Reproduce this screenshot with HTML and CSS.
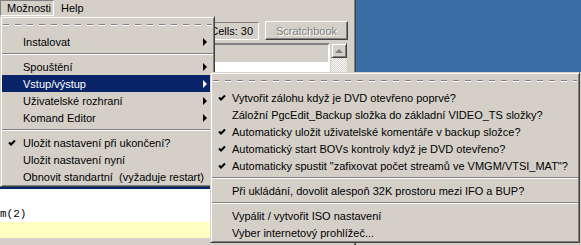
FILE: index.html
```html
<!DOCTYPE html>
<html lang="cs">
<head>
    <meta charset="UTF-8">
    <title>PgcEdit - Možnosti</title>
    <link rel="stylesheet" href="styles.css">
</head>
<body>

    <div class="screen">

        <!-- Main application window -->
        <div class="app">
            <div class="menubar">
                <span class="mb-item open">Možnosti</span>
                <span class="mb-item">Help</span>
            </div>

            <div class="toolbar">
                <span class="cells">Cells: 30</span>
                <button class="btn" disabled>Scratchbook</button>
            </div>

            <div class="list-area">
                <div class="list">
                    <div class="list-head"></div>
                </div>
                <div class="scrollbar">
                    <div class="scroll-up"><span class="up-arrow"></span></div>
                    <div class="scroll-track"></div>
                </div>
            </div>

            <div class="editor">
                <div class="line"></div>
                <div class="line">m(2)</div>
                <div class="line current"></div>
            </div>
        </div>

        <div class="desktop"></div>

        <!-- Možnosti menu -->
        <div class="dropdown main-menu">
            <div class="tearoff"></div>
            <div class="item"><span class="mark"></span><span class="label">Instalovat</span><span class="arrow"></span></div>
            <div class="sep"></div>
            <div class="item"><span class="mark"></span><span class="label">Spouštění</span><span class="arrow"></span></div>
            <div class="item active"><span class="mark"></span><span class="label">Vstup/výstup</span><span class="arrow"></span></div>
            <div class="item"><span class="mark"></span><span class="label">Uživatelské rozhraní</span><span class="arrow"></span></div>
            <div class="item"><span class="mark"></span><span class="label">Komand Editor</span><span class="arrow"></span></div>
            <div class="sep"></div>
            <div class="item"><span class="mark"><svg width="8" height="8" viewBox="0 0 8 8"><polyline points="1,3.5 3,5.5 7,1.5"/></svg></span><span class="label">Uložit nastavení při ukončení?</span></div>
            <div class="item"><span class="mark"></span><span class="label">Uložit nastavení nyní</span></div>
            <div class="item"><span class="mark"></span><span class="label">Obnovit standartní&nbsp; (vyžaduje restart)</span></div>
        </div>

        <!-- Vstup/výstup submenu -->
        <div class="dropdown sub-menu">
            <div class="tearoff"></div>
            <div class="item"><span class="mark"><svg width="8" height="8" viewBox="0 0 8 8"><polyline points="1,3.5 3,5.5 7,1.5"/></svg></span><span class="label">Vytvořit zálohu když je DVD otevřeno poprvé?</span></div>
            <div class="item"><span class="mark"></span><span class="label">Záložní PgcEdit_Backup složka do základní VIDEO_TS složky?</span></div>
            <div class="item"><span class="mark"><svg width="8" height="8" viewBox="0 0 8 8"><polyline points="1,3.5 3,5.5 7,1.5"/></svg></span><span class="label">Automaticky uložit uživatelské komentáře v backup složce?</span></div>
            <div class="item"><span class="mark"><svg width="8" height="8" viewBox="0 0 8 8"><polyline points="1,3.5 3,5.5 7,1.5"/></svg></span><span class="label">Automatický start BOVs kontroly když je DVD otevřeno?</span></div>
            <div class="item"><span class="mark"><svg width="8" height="8" viewBox="0 0 8 8"><polyline points="1,3.5 3,5.5 7,1.5"/></svg></span><span class="label">Automaticky spustit "zafixovat počet streamů ve VMGM/VTSI_MAT"?</span></div>
            <div class="sep"></div>
            <div class="item"><span class="mark"></span><span class="label">Při ukládání, dovolit alespoň 32K prostoru mezi IFO a BUP?</span></div>
            <div class="sep"></div>
            <div class="item"><span class="mark"></span><span class="label">Vypálit / vytvořit ISO nastavení</span></div>
            <div class="item"><span class="mark"></span><span class="label">Vyber internetový prohlížeč...</span></div>
        </div>

    </div>

</body>
</html>
```

FILE: styles.css
```css
body {
    margin: 0;
    padding: 0;
    font-family: 'Liberation Sans', Arial, sans-serif;
    font-size: 11px;
    color: #000;
    background-color: #d4d0c8;
    overflow: hidden;
}

.screen {
    position: relative;
    width: 581px;
    height: 245px;
    display: grid;
    grid-template-columns: 356px 1fr;
    grid-template-rows: 72px 1fr;
    background-color: #d4d0c8;
}

/* Application window */
.app {
    grid-row: 1 / 3;
    display: flex;
    flex-direction: column;
    border-right: 1px solid #404040;
    box-shadow: inset -1px 0 #808080;
}

.menubar {
    height: 17px;
    display: flex;
    align-items: flex-start;
}

.mb-item {
    height: 16px;
    line-height: 15px;
    padding: 0 6px;
    box-sizing: border-box;
    border: 1px solid transparent;
}

.mb-item.open {
    width: 54px;
    border-color: #808080 #fff #fff #808080;
}

.toolbar {
    height: 26px;
    display: flex;
    justify-content: flex-end;
    align-items: flex-start;
    gap: 6px;
    padding-right: 7px;
}

.cells {
    margin-top: 5px;
    height: 18px;
    line-height: 16px;
    padding: 0 5px 0 14px;
    box-sizing: border-box;
    border: 1px solid;
    border-color: #808080 #fff #fff #808080;
}

.btn {
    margin-top: 4px;
    width: 83px;
    height: 19px;
    padding: 0;
    font-family: inherit;
    font-size: 11px;
    color: #808080;
    text-shadow: 1px 1px #fff;
    background-color: #d4d0c8;
    border: 1px solid;
    border-color: #fff #404040 #404040 #fff;
    box-shadow: inset -1px -1px #808080;
}

.list-area {
    height: 144px;
    display: flex;
    gap: 1px;
    padding-right: 8px;
}

.list {
    flex: 1;
    background-color: #fff;
    border: 2px solid;
    border-color: #808080 #fff #fff #808080;
    box-shadow: inset 1px 1px #404040;
}

.list-head {
    height: 17px;
    background-color: #d4d0c8;
}

.scrollbar {
    width: 16px;
    display: flex;
    flex-direction: column;
}

.scroll-up {
    height: 15px;
    box-sizing: border-box;
    border: 1px solid;
    border-color: #d4d0c8 #404040 #404040 #d4d0c8;
    box-shadow: inset 1px 1px #fff, inset -1px -1px #808080;
    display: flex;
    align-items: center;
    justify-content: center;
}

.up-arrow {
    width: 0;
    height: 0;
    border-left: 4px solid transparent;
    border-right: 4px solid transparent;
    border-bottom: 4px solid #808080;
}

.scroll-track {
    flex: 1;
    background: conic-gradient(#fff 25%, #d4d0c8 0 50%, #fff 0 75%, #d4d0c8 0) 0 0 / 2px 2px;
}

.editor {
    border-top: 2px solid #0a246a;
    padding-top: 1px;
    background-color: #fff;
    font-family: 'Liberation Mono', 'Courier New', monospace;
    font-size: 11px;
}

.editor .line {
    height: 16px;
    line-height: 16px;
    white-space: pre;
}

.editor .line.current {
    background-color: #ffffc0;
}

.desktop {
    background-color: #3a6ea5;
}

/* Dropdown menus */
.dropdown {
    position: absolute;
    box-sizing: border-box;
    padding: 1px;
    background-color: #d4d0c8;
    border: 1px solid;
    border-color: #d4d0c8 #404040 #404040 #d4d0c8;
    box-shadow: inset 1px 1px #fff, inset -1px -1px #808080;
}

.main-menu {
    left: 0;
    top: 16px;
    width: 215px;
}

.sub-menu {
    left: 210px;
    top: 72px;
    width: 370px;
}

.tearoff {
    height: 15px;
    box-sizing: border-box;
    padding: 6px 1px 0;
}

.tearoff::before,
.tearoff::after {
    content: "";
    display: block;
    height: 1px;
}

.tearoff::before {
    background: repeating-linear-gradient(90deg, #808080 0 6px, transparent 6px 12px);
}

.tearoff::after {
    background: repeating-linear-gradient(90deg, #fff 0 6px, transparent 6px 12px);
}

.sep {
    height: 8px;
    box-sizing: border-box;
    padding-top: 3px;
}

.sep::before {
    content: "";
    display: block;
    height: 1px;
    background-color: #808080;
    border-bottom: 1px solid #fff;
}

.item {
    height: 17px;
    display: flex;
    align-items: center;
    padding-right: 6px;
    white-space: pre;
}

.item.active {
    background-color: #0a246a;
    color: #fff;
}

.mark {
    width: 21px;
    flex: none;
    padding-left: 6px;
    box-sizing: border-box;
    display: flex;
    align-items: center;
}

.mark svg polyline {
    fill: none;
    stroke: #000;
    stroke-width: 2;
}

.sub-menu .mark {
    width: 20px;
    padding-left: 6px;
}

.label {
    flex: 1;
}

.arrow {
    width: 0;
    height: 0;
    border-top: 4px solid transparent;
    border-bottom: 4px solid transparent;
    border-left: 4px solid #000;
}

.item.active .arrow {
    border-left-color: #fff;
}
```
